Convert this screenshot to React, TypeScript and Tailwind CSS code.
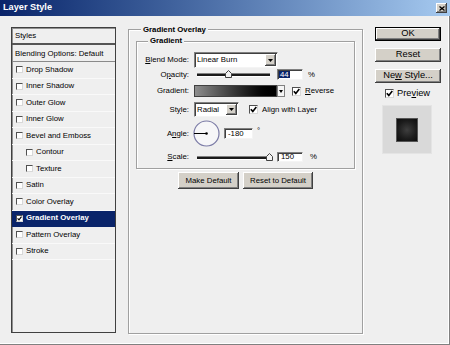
import React from "react";

const raised =
  "bg-[#d4d0c8] shadow-[inset_-1px_-1px_0_#404040,inset_1px_1px_0_#ffffff,inset_-2px_-2px_0_#808080]";
const sunken =
  "bg-white border border-t-[#808080] border-l-[#808080] border-r-[#f4f4f4] border-b-[#f4f4f4] shadow-[inset_1px_1px_0_#404040]";

function Check({ checked, big }: { checked?: boolean; big?: boolean }) {
  return (
    <div
      className={`${big ? "w-[9px] h-[9px]" : "w-[7px] h-[7px]"} shrink-0 bg-white border border-t-[#505050] border-l-[#505050] border-r-[#d8d8d8] border-b-[#d8d8d8] flex items-center justify-center`}
    >
      {checked && (
        <svg width={big ? 7 : 5} height={big ? 7 : 5} viewBox="0 0 7 7">
          <path d="M0.8 3.2 L2.8 5.4 L6.3 1" fill="none" stroke="#000" strokeWidth="1.6" />
        </svg>
      )}
    </div>
  );
}

function DropButton() {
  return (
    <div className={`${raised} w-[11px] h-full shrink-0 flex items-center justify-center`}>
      <svg width="5" height="3" viewBox="0 0 5 3">
        <polygon points="0,0 5,0 2.5,3" fill="#000" />
      </svg>
    </div>
  );
}

function Slider({ thumb, w }: { thumb: string; w: string }) {
  return (
    <div className={`relative ${w} h-full flex items-center`}>
      <div className="w-full h-[3px] bg-[#1a1a1a] border-t border-[#808080] shadow-[0_1px_0_#ffffff]" />
      <svg className={`absolute top-[1px] ${thumb}`} width="7" height="8" viewBox="0 0 7 8">
        <polygon points="0.5,7.5 0.5,3.5 3.5,0.5 6.5,3.5 6.5,7.5" fill="#f2f2f2" stroke="#404040" />
      </svg>
    </div>
  );
}

const items = [
  { label: "Drop Shadow" },
  { label: "Inner Shadow" },
  { label: "Outer Glow" },
  { label: "Inner Glow" },
  { label: "Bevel and Emboss" },
  { label: "Contour", indent: true },
  { label: "Texture", indent: true },
  { label: "Satin" },
  { label: "Color Overlay" },
  { label: "Gradient Overlay", selected: true },
  { label: "Pattern Overlay" },
  { label: "Stroke" },
];

export default function App() {
  return (
    <div className="w-[450px] h-[345px] bg-[#efefef] font-['Liberation_Sans',Arial,sans-serif] text-[7.8px] leading-none text-black overflow-hidden shadow-[inset_-1px_-1px_0_#808080,inset_-2px_-2px_0_#ffffff]">
      {/* title bar */}
      <div className="h-[16px] bg-linear-to-r from-[#0a246a] to-[#a6caf0] flex items-center justify-between pl-[3px] pr-[3px]">
        <span className="text-white font-bold text-[9.2px]">Layer Style</span>
        <div className={`${raised} w-[11px] h-[10px] flex items-center justify-center`}>
          <svg width="6" height="5" viewBox="0 0 6 5">
            <path d="M0.5 0.5 L5.5 4.5 M5.5 0.5 L0.5 4.5" stroke="#000" strokeWidth="1.3" />
          </svg>
        </div>
      </div>

      <div className="flex pt-[11px] pl-[11px]">
        {/* styles list */}
        <div className="w-[105px] h-[306px] border border-[#404040] shadow-[inset_1px_1px_0_#909090] flex flex-col">
          <div className="h-[17px] shrink-0 flex items-center pl-[3px] pt-[1px] border-b-2 border-[#555555]">Styles</div>
          <div className="h-[17px] shrink-0 flex items-center pl-[3px] pt-[1px] border-b border-[#8a8a8a]">
            Blending Options: Default
          </div>
          {items.map((it) => (
            <div
              key={it.label}
              className={`h-[16.5px] shrink-0 flex items-center gap-[3px] border-b ${
                it.selected
                  ? "bg-[#0a246a] text-white font-bold border-[#0a246a]"
                  : "border-[#f9f9f9]"
              } ${it.indent ? "pl-[14px]" : "pl-[4px]"}`}
            >
              <Check checked={it.selected} />
              <span>{it.label}</span>
            </div>
          ))}
        </div>

        {/* gradient overlay group */}
        <fieldset className="ml-[12px] -mt-[3px] w-[235px] h-[310px] border border-[#a0a0a0] shadow-[inset_1px_1px_0_#ffffff,1px_1px_0_#ffffff] p-0">
          <legend className="ml-[12px] px-[2px] bg-[#efefef] font-bold leading-[11px]">Gradient Overlay</legend>

          <fieldset className="mx-[7px] mt-[1px] border border-[#a0a0a0] shadow-[inset_1px_1px_0_#ffffff,1px_1px_0_#ffffff] p-0 pb-[6px]">
            <legend className="ml-[11px] px-[2px] bg-[#efefef] font-bold leading-[10px]">Gradient</legend>

            <div className="mt-[6px] h-[16px] flex items-center">
              <span className="w-[52px] text-right">
                <span className="underline">B</span>lend Mode:
              </span>
              <div className={`${sunken} ml-[5px] w-[84px] h-[16px] flex items-center justify-between pl-[2px] p-[1px]`}>
                <span>Linear Burn</span>
                <DropButton />
              </div>
            </div>

            <div className="mt-[1px] h-[11px] flex items-center">
              <span className="w-[52px] text-right">
                O<span className="underline">p</span>acity:
              </span>
              <div className="ml-[8px] h-full">
                <Slider w="w-[73px]" thumb="left-[28px]" />
              </div>
              <div className={`${sunken} ml-[7px] w-[26px] h-[11px] flex items-center pl-[1px]`}>
                <span className="bg-[#0a246a] text-white px-[1px]">44</span>
              </div>
              <span className="ml-[5px]">%</span>
            </div>

            <div className="mt-[5px] h-[12px] flex items-center">
              <span className="w-[52px] text-right">Gradient:</span>
              <div className="ml-[5px] w-[83px] h-[12px] border border-[#404040] bg-linear-to-r from-[#8e8e8e] to-black" />
              <div className="w-[8px] h-[12px] bg-[#f4f4f4] border border-[#808080] flex items-center justify-center">
                <svg width="4" height="3" viewBox="0 0 4 3">
                  <polygon points="0,0 4,0 2,3" fill="#000" />
                </svg>
              </div>
              <div className="ml-[7px]">
                <Check checked big />
              </div>
              <span className="ml-[4px]">
                <span className="underline">R</span>everse
              </span>
            </div>

            <div className="mt-[5px] h-[15px] flex items-center">
              <span className="w-[52px] text-right">
                St<span className="underline">y</span>le:
              </span>
              <div className={`${sunken} ml-[5px] w-[45px] h-[15px] flex items-center justify-between pl-[2px] p-[1px]`}>
                <span>Radial</span>
                <DropButton />
              </div>
              <div className="ml-[10px]">
                <Check checked big />
              </div>
              <span className="ml-[4px]">Align with Layer</span>
            </div>

            <div className="mt-[3px] h-[27px] flex items-center">
              <span className="w-[52px] text-right">
                A<span className="underline">n</span>gle:
              </span>
              <svg className="ml-[4px]" width="27" height="27" viewBox="0 0 27 27">
                <circle cx="13.5" cy="13.5" r="12.5" fill="#f6f6f8" stroke="#7b7ba6" strokeWidth="1.2" />
                <line x1="1" y1="13.5" x2="13.5" y2="13.5" stroke="#000" strokeWidth="1" />
                <circle cx="13.5" cy="13.5" r="1.3" fill="#000" />
              </svg>
              <div className={`${sunken} ml-[4px] w-[29px] h-[11px] flex items-center pl-[3px]`}>-180</div>
              <span className="ml-[4px] self-start mt-[7px]">°</span>
            </div>

            <div className="mt-[5px] h-[10px] flex items-center">
              <span className="w-[52px] text-right">
                <span className="underline">S</span>cale:
              </span>
              <div className="ml-[8px] h-full">
                <Slider w="w-[75px]" thumb="left-[69px]" />
              </div>
              <div className={`${sunken} ml-[5px] w-[26px] h-[10px] flex items-center pl-[3px]`}>150</div>
              <span className="ml-[7px]">%</span>
            </div>
          </fieldset>

          <div className="mt-[3px] flex justify-center gap-[4px]">
            <div className={`${raised} w-[61px] h-[17px] flex items-center justify-center`}>Make Default</div>
            <div className={`${raised} w-[70px] h-[17px] flex items-center justify-center`}>Reset to Default</div>
          </div>
        </fieldset>

        {/* right column */}
        <div className="ml-[12px] w-[66px] flex flex-col text-[9.3px]">
          <div className={`${raised} h-[14px] border border-black flex items-center justify-center`}>OK</div>
          <div className={`${raised} mt-[7px] h-[14px] flex items-center justify-center`}>Reset</div>
          <div className={`${raised} mt-[7px] h-[14px] flex items-center justify-center`}>
            Ne<span className="underline">w</span>&nbsp;Style...
          </div>
          <div className="mt-[6px] h-[9px] flex items-center pl-[10px]">
            <Check checked big />
            <span className="ml-[3px] leading-[9px]">
              Pre<span className="underline">v</span>iew
            </span>
          </div>
          <div className="mt-[7px] ml-[7px] w-[50px] h-[49px] bg-[#d9d9d9] border border-[#e4e4e4] flex items-center justify-center">
            <div className="w-[22px] h-[24px] border border-[#555555] bg-[radial-gradient(circle,#3e3e3e_0%,#1c1c1c_60%,#0c0c0c_100%)]" />
          </div>
        </div>
      </div>
    </div>
  );
}
